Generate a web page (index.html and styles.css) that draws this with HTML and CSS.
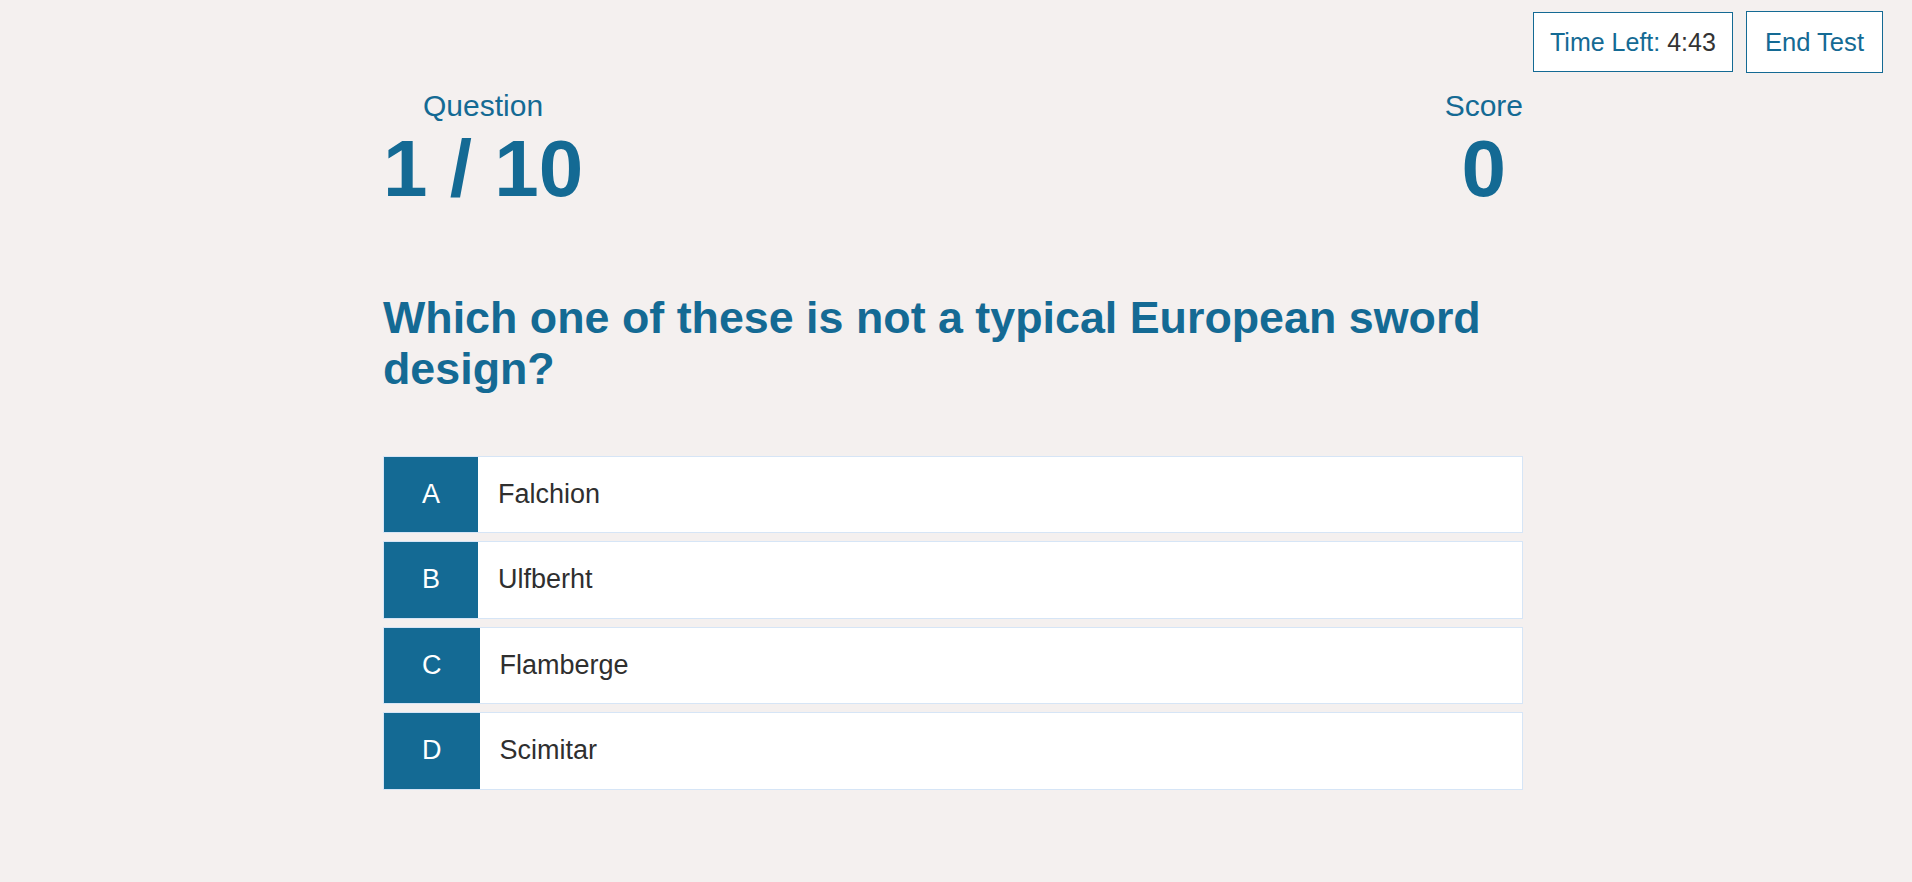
FILE: index.html
```html
<!DOCTYPE html>
<html lang="en">
<head>
<meta charset="utf-8">
<title>Quiz</title>
<link rel="stylesheet" href="styles.css">
</head>
<body>
  <header class="topbar">
    <div class="timer">Time Left: <span class="timer-value">4:43</span></div>
    <button class="end-btn" type="button">End Test</button>
  </header>
  <main class="quiz">
    <section class="stats">
      <div class="stat">
        <div class="stat-label">Question</div>
        <div class="stat-value">1 / 10</div>
      </div>
      <div class="stat">
        <div class="stat-label">Score</div>
        <div class="stat-value">0</div>
      </div>
    </section>
    <h1 class="question">Which one of these is not a typical European sword design?</h1>
    <ul class="options">
      <li class="option"><span class="option-letter">A</span><span class="option-text">Falchion</span></li>
      <li class="option"><span class="option-letter">B</span><span class="option-text">Ulfberht</span></li>
      <li class="option"><span class="option-letter">C</span><span class="option-text">Flamberge</span></li>
      <li class="option"><span class="option-letter">D</span><span class="option-text">Scimitar</span></li>
    </ul>
  </main>
</body>
</html>
```
FILE: styles.css
```css
* {
  box-sizing: border-box;
}

body {
  margin: 0;
  background: #f4f0ef;
  font-family: "Liberation Sans", Arial, sans-serif;
  color: #146a94;
}

.topbar {
  display: flex;
  justify-content: flex-end;
  align-items: center;
  gap: 13px;
  padding: 11px 29px 0 0;
}

.timer {
  border: 1px solid #146a94;
  background: #ffffff;
  padding: 14px 16px;
  font-size: 25px;
  line-height: 30px;
  color: #146a94;
}

.timer-value {
  color: #333333;
}

.end-btn {
  border: 1px solid #146a94;
  background: #ffffff;
  padding: 15px 18px;
  margin: 0;
  font-family: "Liberation Sans", Arial, sans-serif;
  font-size: 25.6px;
  line-height: 30px;
  color: #146a94;
  cursor: pointer;
}

.quiz {
  width: 1140px;
  margin: 16px 0 0 calc(50% - 573px);
}

.stats {
  display: flex;
  justify-content: space-between;
}

.stat {
  text-align: center;
}

.stat-label {
  font-size: 30px;
  line-height: normal;
}

.stat-value {
  font-size: 80px;
  font-weight: bold;
  line-height: normal;
}

.question {
  margin: 77px 0 62px;
  font-size: 44.8px;
  font-weight: bold;
  line-height: normal;
  color: #146a94;
}

.options {
  list-style: none;
  margin: 0;
  padding: 0;
  display: flex;
  flex-direction: column;
  gap: 8px;
}

.option {
  display: flex;
  align-items: stretch;
  background: #ffffff;
  border: 1px solid #d6e5f6;
  font-size: 27px;
  line-height: 29.4px;
}

.option-letter {
  display: flex;
  align-items: center;
  padding: 23px 38px;
  background: #146a94;
  color: #ffffff;
}

.option-text {
  display: flex;
  align-items: center;
  padding: 0 20px;
  color: #2f2f2f;
}
```
